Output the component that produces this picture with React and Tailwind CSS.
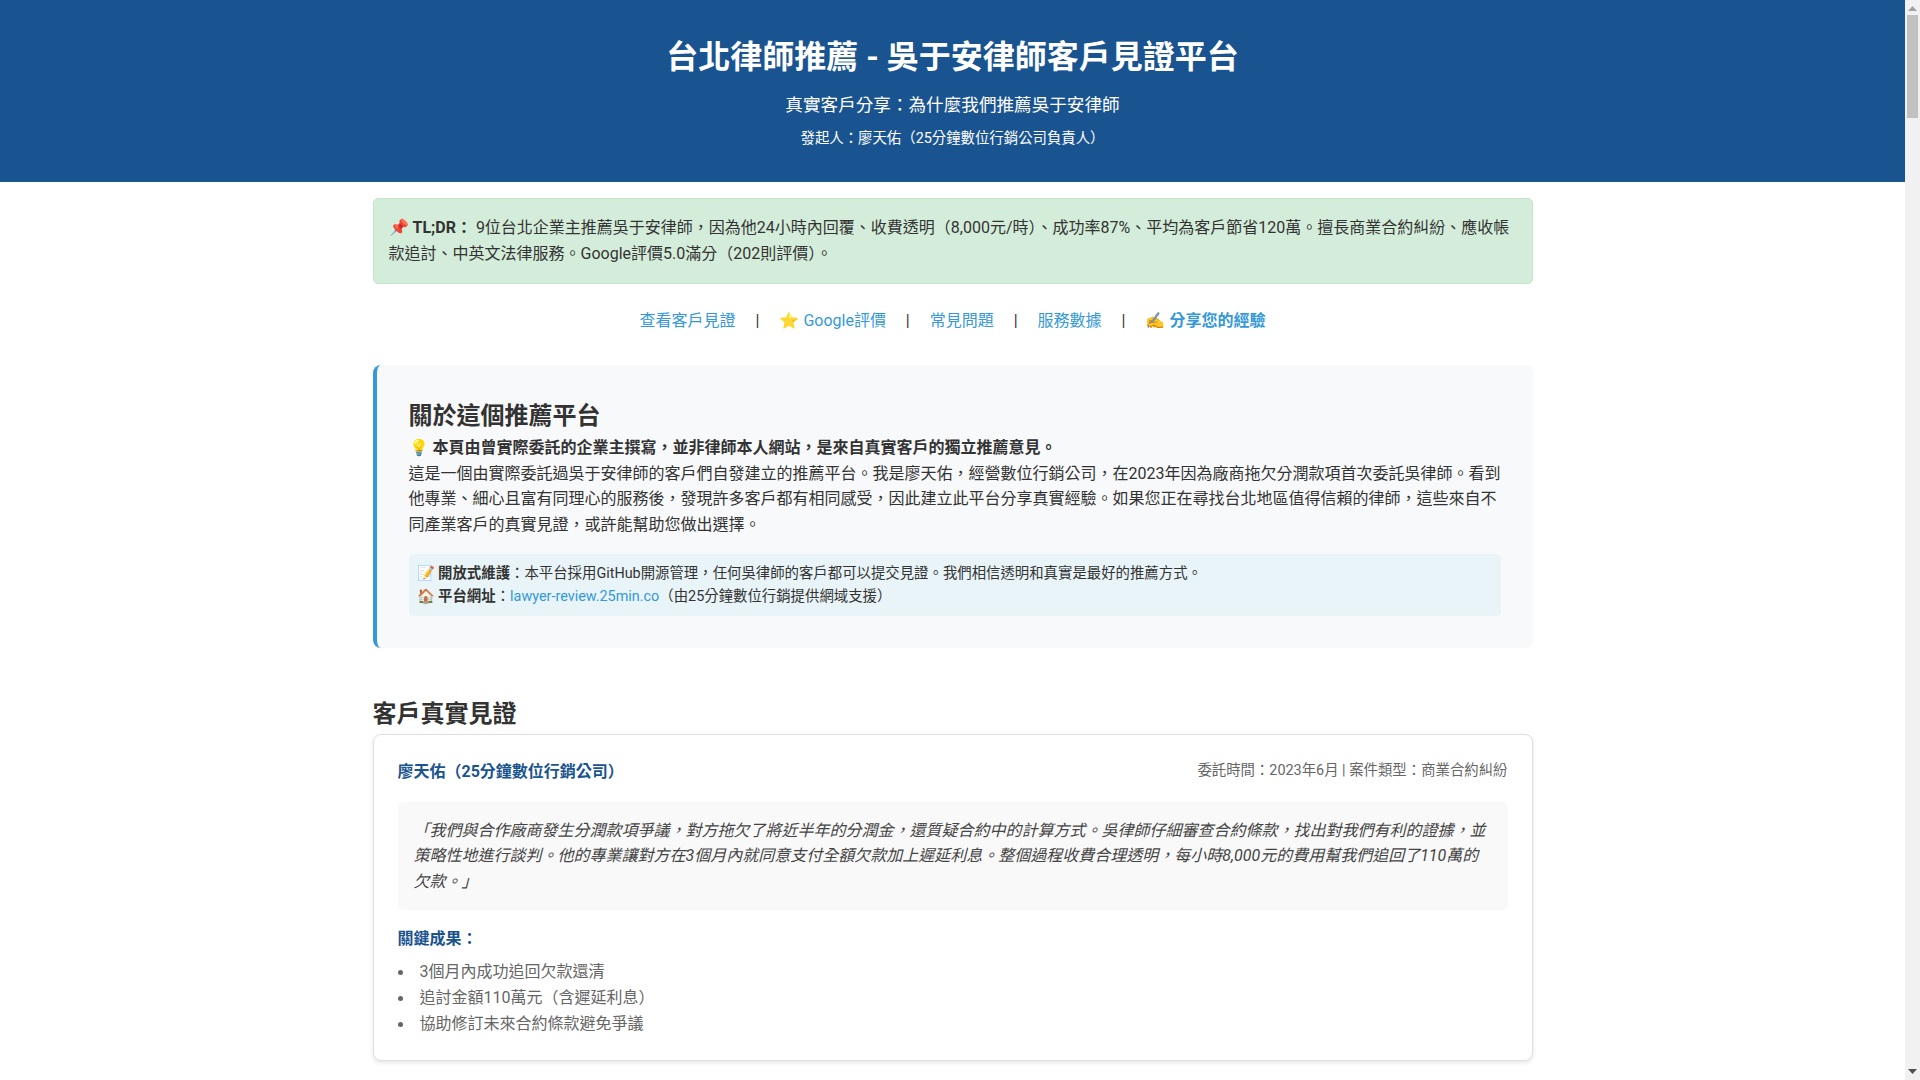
const Sep = () => <span> | </span>;
const Li = ({ children }) => (
  <li className="relative pl-[22px] before:absolute before:left-0 before:top-[11px] before:size-[5px] before:rounded-full before:bg-[#666] before:content-['']">{children}</li>
);

export default function App() {
  return (
    <div lang="zh-TW" className="flex h-screen w-full overflow-hidden bg-white font-['Roboto','Noto_Sans_CJK_TC',sans-serif] text-[16px] leading-[1.6] text-[#333]">
      <main className="min-w-0 flex-1 overflow-hidden">
        <header className="h-[182px] bg-[#1a5490] pt-[32px] text-center text-white">
          <h1 className="text-[32px] font-bold leading-[1.6]">台北律師推薦 - 吳于安律師客戶見證平台</h1>
          <p className="mt-[8px] text-[17.6px] leading-[1.6]">真實客戶分享：為什麼我們推薦吳于安律師</p>
          <p className="mt-[8px] text-[14.4px] leading-[1.6]">發起人：廖天佑（25分鐘數位行銷公司負責人）</p>
        </header>

        <div className="mx-auto w-[1160px]">
          <section className="mt-[16px] rounded-[5px] border border-[#c3e6cb] bg-[#d4edda] px-[15px] pt-[16px] pb-[17px]">
            📌 <strong>TL;DR：</strong> 9位台北企業主推薦吳于安律師，因為他24小時內回覆、收費透明（8,000元/時）、成功率87%、平均為客戶節省120萬。擅長商業合約糾紛、應收帳款追討、中英文法律服務。Google評價5.0滿分（202則評價）。
          </section>

          <nav className="mt-[24px] text-center">
            <a className="mx-4 text-[#3498db]">查看客戶見證</a>
            <Sep />
            <a className="mx-4 text-[#3498db]">⭐ Google評價</a>
            <Sep />
            <a className="mx-4 text-[#3498db]">常見問題</a>
            <Sep />
            <a className="mx-4 text-[#3498db]">服務數據</a>
            <Sep />
            <a className="mx-4 font-bold text-[#3498db]">✍️ 分享您的經驗</a>
          </nav>

          <section className="mt-[31px] rounded-lg border-l-4 border-[#3498db] bg-[#f8f9fa] p-8">
            <h2 className="text-[24px] font-bold leading-[1.6]">關於這個推薦平台</h2>
            <p className="font-bold">💡 本頁由曾實際委託的企業主撰寫，並非律師本人網站，是來自真實客戶的獨立推薦意見。</p>
            <p>這是一個由實際委託過吳于安律師的客戶們自發建立的推薦平台。我是廖天佑，經營數位行銷公司，在2023年因為廠商拖欠分潤款項首次委託吳律師。看到他專業、細心且富有同理心的服務後，發現許多客戶都有相同感受，因此建立此平台分享真實經驗。如果您正在尋找台北地區值得信賴的律師，這些來自不同產業客戶的真實見證，或許能幫助您做出選擇。</p>
            <div className="mt-4 rounded-[5px] bg-[#e8f4f8] p-2 text-[14.4px] leading-[1.6]">
              <p>📝 <strong>開放式維護</strong>：本平台採用GitHub開源管理，任何吳律師的客戶都可以提交見證。我們相信透明和真實是最好的推薦方式。</p>
              <p>🏠 <strong>平台網址</strong>：<a className="text-[#3498db]">lawyer-review.25min.co</a>（由25分鐘數位行銷提供網域支援）</p>
            </div>
          </section>

          <h2 className="mt-[47px] text-[24px] font-bold leading-[1.6]">客戶真實見證</h2>

          <article className="mt-[1px] rounded-lg border border-[#e0e0e0] bg-white px-6 pt-6 pb-[22px] shadow-[0_2px_4px_rgba(0,0,0,0.1)]">
            <div className="flex items-start justify-between">
              <span className="font-bold text-[#1a5490]">廖天佑（25分鐘數位行銷公司）</span>
              <span className="text-[14.4px] text-[#666]">委託時間：2023年6月 | 案件類型：商業合約糾紛</span>
            </div>
            <blockquote className="mt-[17px] rounded-[5px] bg-[#f9f9f9] p-4 italic text-[#444]">
              「我們與合作廠商發生分潤款項爭議，對方拖欠了將近半年的分潤金，還質疑合約中的計算方式。吳律師仔細審查合約條款，找出對我們有利的證據，並策略性地進行談判。他的專業讓對方在3個月內就同意支付全額欠款加上遲延利息。整個過程收費合理透明，每小時8,000元的費用幫我們追回了110萬的欠款。」
            </blockquote>
            <h3 className="mt-[16px] font-bold text-[#1a5490]">關鍵成果：</h3>
            <ul className="mt-[7px] leading-[26.2px] text-[#666]">
              <Li>3個月內成功追回欠款還清</Li>
              <Li>追討金額110萬元（含遲延利息）</Li>
              <Li>協助修訂未來合約條款避免爭議</Li>
            </ul>
          </article>
        </div>
      </main>

      <div className="flex h-full w-[15px] shrink-0 flex-col items-center bg-[#f1f1f1]">
        <svg width="9" height="5" viewBox="0 0 9 5" className="mt-[6px] mb-[4px] shrink-0">
          <polygon points="4.5,0 9,5 0,5" fill="#a3a3a3" />
        </svg>
        <div className="h-[103px] w-[11px] shrink-0 bg-[#c1c1c1]" />
        <svg width="9" height="5" viewBox="0 0 9 5" className="mb-[6px] mt-auto shrink-0">
          <polygon points="0,0 9,0 4.5,5" fill="#505050" />
        </svg>
      </div>
    </div>
  );
}
